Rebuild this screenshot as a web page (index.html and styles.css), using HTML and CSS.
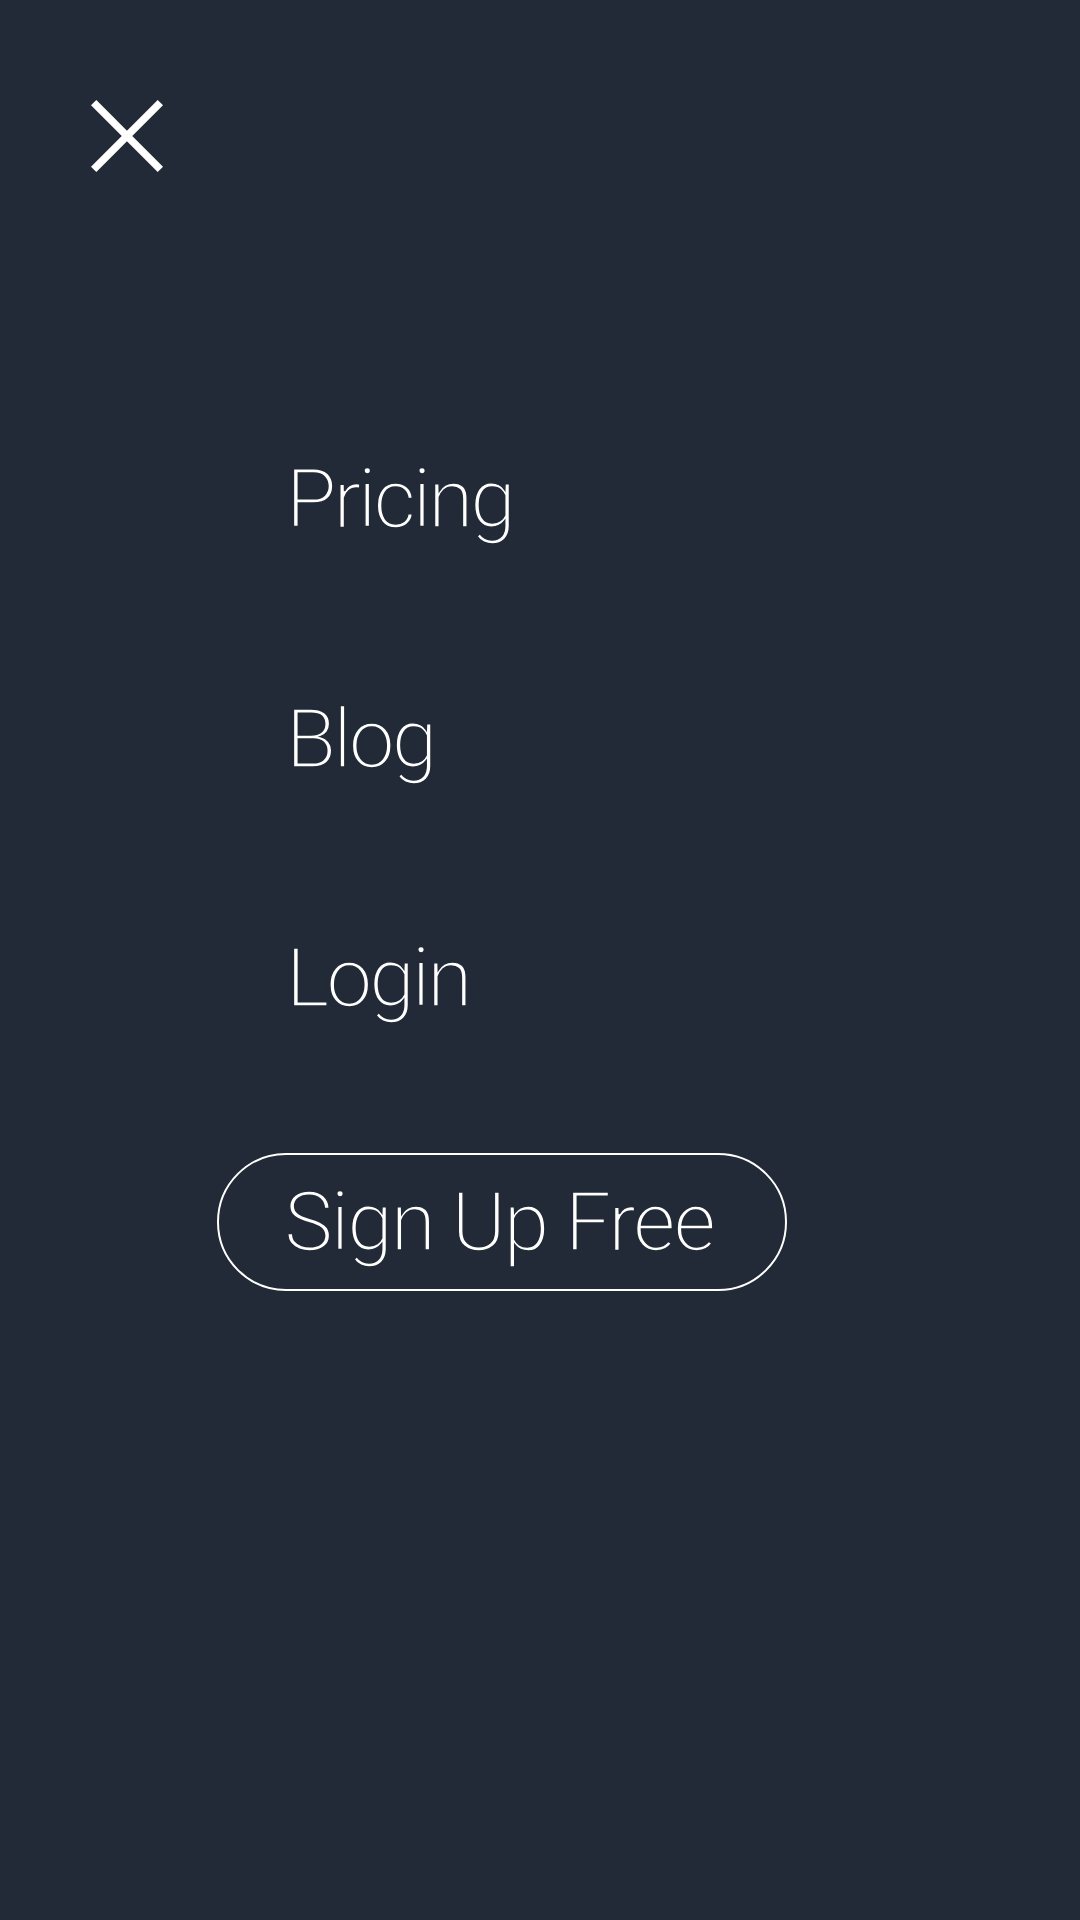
FILE: index.html
```html
<!DOCTYPE html>
<html lang="en">
<head>
<meta charset="utf-8">
<title>Menu</title>
<link rel="stylesheet" href="styles.css">
</head>
<body>
<div class="screen">
  <header class="topbar">
    <button class="close" aria-label="Close menu">
      <svg width="72" height="72" viewBox="0 0 72 72" aria-hidden="true">
        <line x1="2.65" y1="2.65" x2="69.35" y2="69.35" stroke="#ffffff" stroke-width="7.5" stroke-linecap="butt"/>
        <line x1="69.35" y1="2.65" x2="2.65" y2="69.35" stroke="#ffffff" stroke-width="7.5" stroke-linecap="butt"/>
      </svg>
    </button>
  </header>
  <nav class="menu">
    <a class="menu-link" href="#">Pricing</a>
    <a class="menu-link" href="#">Blog</a>
    <a class="menu-link" href="#">Login</a>
    <a class="signup" href="#">Sign Up Free</a>
  </nav>
</div>
</body>
</html>
```
FILE: styles.css
```css
html, body {
  margin: 0;
  padding: 0;
  background: #222a37;
}

.screen {
  width: 1080px;
  height: 1920px;
  background: #222a37;
  font-family: "Roboto Light", Roboto, "Liberation Sans", sans-serif;
  font-weight: 300;
  color: #ffffff;
  overflow: hidden;
}

.topbar {
  padding: 100px 0 0 91px;
  height: 72px;
}

.close {
  display: block;
  width: 72px;
  height: 72px;
  padding: 0;
  margin: 0;
  border: 0;
  background: none;
  cursor: pointer;
}

.close svg {
  display: block;
}

.menu {
  display: flex;
  flex-direction: column;
  align-items: flex-start;
  padding: 279px 0 0 217px;
  gap: 143.5px;
}

.menu-link,
.signup {
  font-size: 82px;
  font-weight: 300;
  line-height: 96px;
  letter-spacing: -3px;
  color: #ffffff;
  text-decoration: none;
  -webkit-text-stroke: 1.5px #222a37;
}

.menu-link {
  display: block;
  padding-left: 69px;
}

.signup {
  display: block;
  box-sizing: border-box;
  width: 570px;
  margin-top: -17px;
  padding: 19px 6px 19px 0;
  border: 2px solid #ffffff;
  border-radius: 70px;
  text-align: center;
  letter-spacing: -2px;
}
```
